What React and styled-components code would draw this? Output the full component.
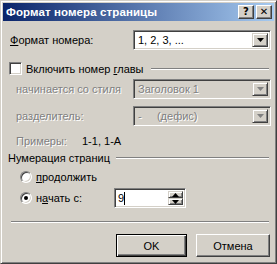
import React from "react";
import styled, { createGlobalStyle } from "styled-components";

const Global = createGlobalStyle`
  html, body { margin: 0; padding: 0; background: #d4d0c8; }
  body { font-family: "Liberation Sans", Arial, sans-serif; font-size: 11px; color: #000; }
  u { text-decoration: underline; text-underline-offset: 1px; }
`;

const Window = styled.div`
  box-sizing: border-box;
  width: 277px;
  height: 264px;
  background: #d4d0c8;
  border-style: solid;
  border-width: 1px;
  border-color: #d4d0c8 #404040 #404040 #d4d0c8;
  box-shadow: inset 1px 1px 0 #fff, inset -1px -1px 0 #808080;
  padding: 2px;
  display: flex;
  flex-direction: column;
`;

const TitleBar = styled.div`
  height: 18px;
  background: linear-gradient(to right, #0a246a, #a6caf0);
  display: flex;
  align-items: center;
  padding: 0 2px 0 3px;
  color: #fff;
  font-weight: bold;
  font-size: 11.5px;
  letter-spacing: 0.1px;
`;

const TitleText = styled.div`
  flex: 1;
  white-space: nowrap;
`;

const CapButton = styled.div`
  box-sizing: border-box;
  width: 16px;
  height: 14px;
  background: #d4d0c8;
  border: 1px solid;
  border-color: #fff #404040 #404040 #fff;
  box-shadow: inset -1px -1px 0 #808080;
  color: #000;
  display: flex;
  align-items: center;
  justify-content: center;
  margin-left: ${(p) => p.$gap || 0}px;
  font-family: "DejaVu Sans", sans-serif;
  font-size: 10px;
  font-weight: bold;
  line-height: 1;
`;

const Content = styled.div`
  flex: 1;
  display: flex;
  flex-direction: column;
  padding: 0 3px 0 5px;
`;

const Row = styled.div`
  display: flex;
  align-items: center;
  height: ${(p) => p.$h}px;
  margin-top: ${(p) => p.$mt || 0}px;
  padding-left: ${(p) => p.$pl || 0}px;
`;

const Label = styled.span`
  white-space: nowrap;
  color: ${(p) => (p.$disabled ? "#808080" : "#000")};
  text-shadow: ${(p) => (p.$disabled ? "1px 1px 0 #fff" : "none")};
  width: ${(p) => (p.$w ? p.$w + "px" : "auto")};
  flex: none;
`;

const Combo = styled.div`
  box-sizing: border-box;
  margin-left: auto;
  width: 138px;
  height: ${(p) => p.$h || 20}px;
  border: 1px solid;
  border-color: #808080 #fff #fff #808080;
  box-shadow: inset 1px 1px 0 #404040, inset -1px -1px 0 #d4d0c8;
  background: ${(p) => (p.$disabled ? "#d4d0c8" : "#fff")};
  display: flex;
  align-items: center;
  padding: 2px;
`;

const ComboText = styled.div`
  flex: 1;
  padding-left: 2px;
  white-space: pre;
  color: ${(p) => (p.$disabled ? "#808080" : "#000")};
  text-shadow: ${(p) => (p.$disabled ? "1px 1px 0 #fff" : "none")};
`;

const DropBtn = styled.div`
  box-sizing: border-box;
  width: 16px;
  height: 100%;
  background: #d4d0c8;
  border: 1px solid;
  border-color: #d4d0c8 #404040 #404040 #d4d0c8;
  box-shadow: inset 1px 1px 0 #fff, inset -1px -1px 0 #808080;
  display: flex;
  align-items: center;
  justify-content: center;
`;

const Arrow = ({ up, color = "#000" }) => (
  <svg width="7" height="4" viewBox="0 0 7 4">
    <path d={up ? "M3.5 0 L7 4 L0 4 Z" : "M0 0 L7 0 L3.5 4 Z"} fill={color} />
  </svg>
);

const GroupHeader = styled.div`
  display: flex;
  align-items: center;
  height: ${(p) => p.$h}px;
  margin-top: ${(p) => p.$mt || 0}px;
  padding-left: ${(p) => p.$pl || 0}px;
`;

const Etched = styled.div`
  flex: 1;
  height: 0;
  border-top: 1px solid #808080;
  border-bottom: 1px solid #fff;
  margin-left: ${(p) => p.$ml || 6}px;
  margin-right: 2px;
`;

const Checkbox = styled.div`
  box-sizing: border-box;
  width: 13px;
  height: 13px;
  background: #fff;
  border: 1px solid;
  border-color: #808080 #fff #fff #808080;
  box-shadow: inset 1px 1px 0 #404040, inset -1px -1px 0 #d4d0c8;
  margin-right: 4px;
  flex: none;
`;

const Radio = styled.div`
  box-sizing: border-box;
  width: 12px;
  height: 12px;
  border-radius: 50%;
  background: #fff;
  border: 1px solid;
  border-color: #808080 #fff #fff #808080;
  box-shadow: inset 1px 1px 0 #404040, inset -1px -1px 0 #d4d0c8;
  margin-right: 4px;
  flex: none;
  display: flex;
  align-items: center;
  justify-content: center;
  &::after {
    content: "";
    display: ${(p) => (p.$checked ? "block" : "none")};
    width: 4px;
    height: 4px;
    border-radius: 50%;
    background: #000;
  }
`;

const Spin = styled.div`
  box-sizing: border-box;
  width: 72px;
  height: 20px;
  border: 1px solid;
  border-color: #808080 #fff #fff #808080;
  box-shadow: inset 1px 1px 0 #404040, inset -1px -1px 0 #d4d0c8;
  background: #fff;
  display: flex;
  align-items: center;
  padding: 2px;
`;

const SpinText = styled.div`
  flex: 1;
  display: flex;
  align-items: center;
  padding-left: 1px;
`;

const Caret = styled.span`
  display: inline-block;
  width: 1px;
  height: 13px;
  background: #000;
`;

const SpinBtns = styled.div`
  display: flex;
  flex-direction: column;
  width: 15px;
  height: 100%;
`;

const SpinBtn = styled.div`
  box-sizing: border-box;
  flex: 1;
  background: #d4d0c8;
  border: 1px solid;
  border-color: #d4d0c8 #404040 #404040 #d4d0c8;
  box-shadow: inset 1px 1px 0 #fff, inset -1px -1px 0 #808080;
  display: flex;
  align-items: center;
  justify-content: center;
`;

const Separator = styled.div`
  height: 0;
  border-top: 1px solid #808080;
  border-bottom: 1px solid #fff;
  margin: ${(p) => p.$mt}px 2px 0 3px;
`;

const ButtonRow = styled.div`
  display: flex;
  justify-content: flex-end;
  gap: 9px;
  margin-top: 11px;
  padding-right: 1px;
`;

const Button = styled.div`
  box-sizing: border-box;
  width: ${(p) => p.$w}px;
  height: 23px;
  background: #d4d0c8;
  display: flex;
  align-items: center;
  justify-content: center;
  border: 1px solid;
  border-color: ${(p) => (p.$default ? "#000" : "#fff #404040 #404040 #fff")};
  box-shadow: ${(p) =>
    p.$default
      ? "inset 1px 1px 0 #fff, inset -1px -1px 0 #404040, inset -2px -2px 0 #808080"
      : "inset -1px -1px 0 #808080"};
`;

export default function App() {
  return (
    <>
      <Global />
      <Window>
        <TitleBar>
          <TitleText>Формат номера страницы</TitleText>
          <CapButton>?</CapButton>
          <CapButton $gap={2}>✕</CapButton>
        </TitleBar>
        <Content>
          <Row $h={20} $mt={9} $pl={2}>
            <Label>
              <u>Ф</u>ормат номера:
            </Label>
            <Combo>
              <ComboText>1, 2, 3, ...</ComboText>
              <DropBtn>
                <Arrow />
              </DropBtn>
            </Combo>
          </Row>

          <GroupHeader $h={13} $mt={12} $pl={1}>
            <Checkbox />
            <Label>
              Включить номер <u>г</u>лавы
            </Label>
            <Etched $ml={7} />
          </GroupHeader>

          <Row $h={20} $mt={4} $pl={8}>
            <Label $disabled>начинается со стиля</Label>
            <Combo $disabled>
              <ComboText $disabled>Заголовок 1</ComboText>
              <DropBtn>
                <Arrow color="#808080" />
              </DropBtn>
            </Combo>
          </Row>

          <Row $h={20} $mt={7} $pl={8}>
            <Label $disabled>разделитель:</Label>
            <Combo $disabled>
              <ComboText $disabled>{"-     (дефис)"}</ComboText>
              <DropBtn>
                <Arrow color="#808080" />
              </DropBtn>
            </Combo>
          </Row>

          <Row $h={14} $mt={8} $pl={8}>
            <Label $disabled $w={66}>
              Примеры:
            </Label>
            <Label>1-1, 1-A</Label>
          </Row>

          <GroupHeader $h={14} $mt={3} $pl={0}>
            <Label>Нумерация страниц</Label>
            <Etched $ml={6} />
          </GroupHeader>

          <Row $h={14} $mt={5} $pl={12}>
            <Radio />
            <Label>
              <u>п</u>родолжить
            </Label>
          </Row>

          <Row $h={20} $mt={4} $pl={12}>
            <Radio $checked />
            <Label $w={78}>
              н<u>а</u>чать с:
            </Label>
            <Spin>
              <SpinText>
                9<Caret />
              </SpinText>
              <SpinBtns>
                <SpinBtn>
                  <Arrow up />
                </SpinBtn>
                <SpinBtn>
                  <Arrow />
                </SpinBtn>
              </SpinBtns>
            </Spin>
          </Row>

          <Separator $mt={13} />

          <ButtonRow>
            <Button $w={71} $default>
              OK
            </Button>
            <Button $w={74}>Отмена</Button>
          </ButtonRow>
        </Content>
      </Window>
    </>
  );
}
